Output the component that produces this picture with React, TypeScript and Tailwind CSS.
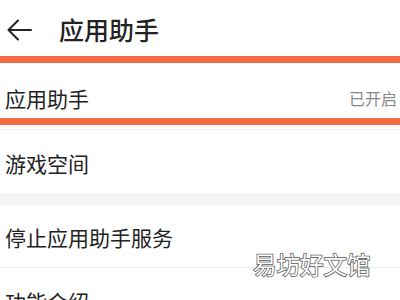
import React from "react";

const font = "font-['Noto_Sans_CJK_SC','Noto_Sans',sans-serif]";

const Accent = () => <div className="h-[7px] bg-[#f36b42]" />;

const App = () => {
  return (
    <div className={`relative w-[400px] h-[300px] overflow-hidden bg-white text-[#222] ${font}`}>
      <div className="h-[56px] flex items-center pt-[3px]">
        <svg width="40" height="30" viewBox="0 0 40 30" className="shrink-0">
          <path
            d="M8.5 15 H31 M18 5.5 L8.5 15 L18 24.5"
            fill="none"
            stroke="#222"
            strokeWidth="2"
            strokeLinecap="round"
            strokeLinejoin="round"
          />
        </svg>
        <span className="ml-[19px] text-[25px] leading-none font-medium">应用助手</span>
      </div>
      <Accent />
      <div className="h-[55px] flex items-center justify-between pt-[15px] pl-[5px] pr-[3px]">
        <span className="text-[21px] leading-none">应用助手</span>
        <span className="text-[16px] leading-none text-[#8a8a8a]">已开启</span>
      </div>
      <Accent />
      <div className="h-[4px]" />
      <div className="h-[1px] bg-[#ececec]" />
      <div className="h-[63px] flex items-center pt-[3px] pl-[5px]">
        <span className="text-[21px] leading-none">游戏空间</span>
      </div>
      <div className="h-[12px] bg-[#f5f5f5]" />
      <div className="h-[63px] flex items-center pt-[3px] pl-[5px] border-b border-[#ececec]">
        <span className="text-[21px] leading-none">停止应用助手服务</span>
      </div>
      <div className="h-[63px] flex items-center pt-[3px] pl-[5px]">
        <span className="text-[21px] leading-none">功能介绍</span>
      </div>
      <div className="absolute left-[253px] top-[253px] text-[23.5px] leading-none text-white [-webkit-text-stroke:1.5px_#555] [paint-order:stroke_fill] tracking-[0px]">
        易坊好文馆
      </div>
    </div>
  );
};

export default App;
